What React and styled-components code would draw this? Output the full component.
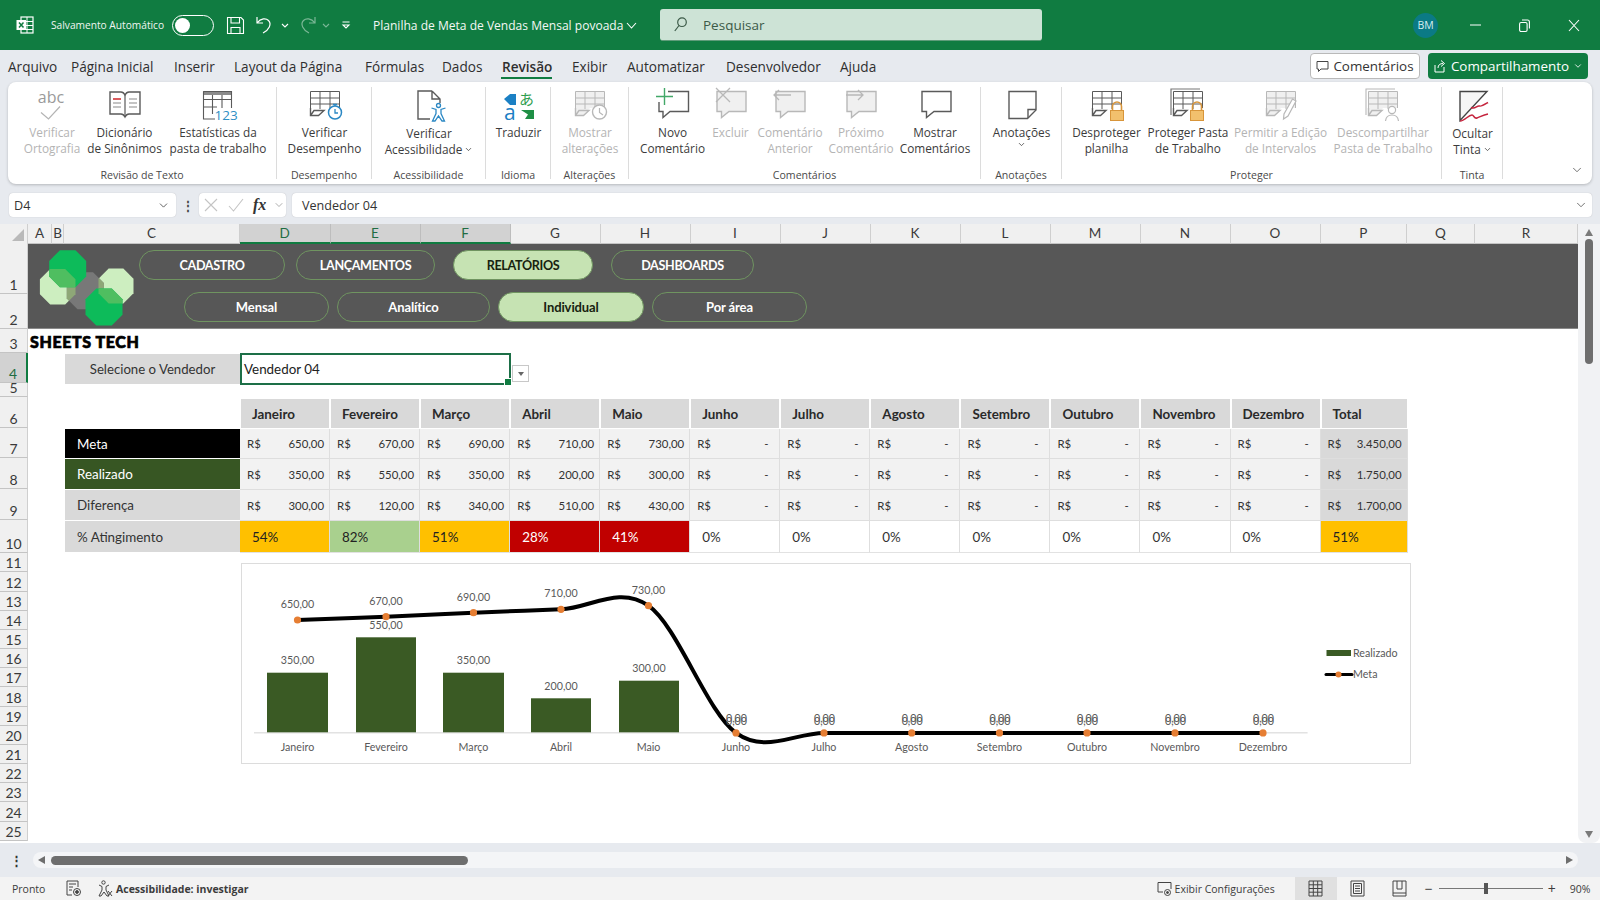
import React from "react";
import styled, { createGlobalStyle } from "styled-components";
import { ChevronDown } from "lucide-react";

const Global = createGlobalStyle`
  html, body { margin: 0; padding: 0; background: #e7eaef; }
  * { box-sizing: border-box; }
  body { font-family: "Open Sans", "Liberation Sans", sans-serif; }
`;
const Page = styled.div`
  width: 1600px; height: 900px; overflow: hidden; display: flex; flex-direction: column; background: #e7eaef; color: #333;
`;
/* ---------- title bar ---------- */
const TitleBar = styled.div`
  height: 50px; background: #107c41; display: flex; align-items: center; color: #fff; flex: none;
`;
const Quick = styled.svg`
  flex: none; margin-left: ${p => p.$ml}px; overflow: visible; opacity: ${p => p.$dim ? 0.45 : 1};
`;
const AutoSave = styled.span`
  margin-left: 17px; width: 114px; font-size: 10.2px; white-space: nowrap; color: #f0f6f2; flex: none;
`;
const Toggle = styled.span`
  margin-left: 7px; width: 42px; height: 21px; border: 1.5px solid #fff; border-radius: 11px; display: flex; align-items: center; padding-left: 2px; flex: none;
  &::before { content: ""; width: 15px; height: 15px; border-radius: 50%; background: #fff; }
`;
const DocTitle = styled.span`
  margin-left: 22px; width: 252px; font-size: 12.05px; white-space: nowrap; color: #f4f8f5; flex: none;
`;
const SearchBox = styled.div`
  margin-left: 23px; width: 382px; height: 32px; background: #cde3d6; border-radius: 3px; border-bottom: 1px solid #5f9c7a; display: flex; align-items: center; padding-left: 14px; gap: 16px; color: #3c5a48; font-size: 13.5px; flex: none;
`;
const Avatar = styled.span`
  margin-left: 371px; width: 25px; height: 25px; border-radius: 50%; background: #0b7a85; font-size: 10.5px; display: flex; align-items: center; justify-content: center; color: #d8eef0; flex: none;
`;
/* ---------- tabs ---------- */
const TabRow = styled.div`
  height: 32px; flex: none; display: flex; align-items: stretch; padding-left: 8px; padding-right: 12px; position: relative;
`;
const Tab = styled.div`
  width: ${p => p.$w}px; flex: none; font-size: 13.6px; line-height: 33px; white-space: nowrap; position: relative; color: #2f2f2f; font-weight: ${p => p.$on ? 600 : 400};
  ${p => p.$on && `&::after { content: ""; position: absolute; left: -1px; width: 51px; top: 27px; height: 2px; background: #107c41; }`}
`;
const RightButtons = styled.div`
  margin-left: auto; display: flex; gap: 8px; align-items: center; padding-top: 0;
`;
const CommentBtn = styled.div`
  width: 110px; height: 26px; background: #fff; border: 1px solid #b9b9b9; border-radius: 4px; display: flex; align-items: center; justify-content: center; gap: 4px; font-size: 13.4px; color: #333; white-space: nowrap;
`;
const ShareBtn = styled.div`
  width: 160px; height: 26px; background: #107c41; border-radius: 4px; display: flex; align-items: center; justify-content: center; gap: 4px; font-size: 13.4px; color: #fff; white-space: nowrap;
`;
/* ---------- ribbon ---------- */
const Ribbon = styled.div`
  margin: 0 8px; height: 102px; flex: none; background: #fff; border-radius: 8px; box-shadow: 0 1px 3px rgba(0,0,0,.22); display: flex; position: relative;
`;
const Group = styled.div`
  width: ${p => p.$w}px; margin-top: 5px; height: 92px; flex: none; display: flex; flex-direction: column; border-right: 1px solid #dcdcdc; padding-left: ${p => p.$pl || 0}px;
`;
const Items = styled.div`
  height: 81px; display: flex; flex: none;
`;
const GroupName = styled.div`
  text-align: center; font-size: 10.6px; line-height: 14px; color: #4a4a4a; white-space: nowrap; margin-left: ${p => -(p.$pl || 0)}px;
`;
const Item = styled.div`
  width: ${p => p.$w}px; flex: none; display: flex; flex-direction: column; align-items: center; padding-top: 1px; color: ${p => p.$off ? "#b4b4b4" : "#3b3b3b"};
`;
const IconSlot = styled.div`
  height: 32px; width: 36px; flex: none; margin-bottom: ${p => p.$drop ? 5 : 3.5}px;
`;
const ItemLine = styled.div`
  font-size: 11.8px; line-height: 16px; white-space: nowrap; display: flex; align-items: center; gap: 2px;
`;
const Collapse = styled.div`
  margin-left: auto; align-self: flex-end; margin-right: 8px; margin-bottom: 7px; color: #555; display: flex;
`;
const Ico = styled.svg`
  display: block; width: 36px; height: 32px; overflow: visible; fill: none;
`;
const Cap = styled.text`
  font-family: "Open Sans", sans-serif; font-size: ${p => p.$s}px;
`;
/* ---------- formula bar ---------- */
const FormulaBar = styled.div`
  margin: 9px 8px 0 9px; height: 24px; flex: none; display: flex; align-items: stretch; font-size: 12.6px; color: #333;
`;
const NameBox = styled.div`
  width: 167px; background: #fff; border-radius: 4px; display: flex; align-items: center; justify-content: space-between; padding: 0 6px 0 5px; box-shadow: 0 0 1px rgba(0,0,0,.25);
`;
const Dots = styled.div`
  width: 23px; flex: none; display: flex; align-items: center; justify-content: center; font-weight: 700; color: #444; font-size: 12px;
`;
const FxBox = styled.div`
  width: 87px; background: #fff; border-radius: 4px; display: flex; align-items: center; padding: 0 0 0 4px; gap: 8px; color: #c4c4c4; box-shadow: 0 0 1px rgba(0,0,0,.25);
`;
const Fx = styled.i`
  font-family: "Liberation Serif", serif; font-weight: 700; font-size: 16px; color: #333; width: 12px;
`;
const FormulaInput = styled.div`
  flex: 1; margin-left: 6px; background: #fff; border-radius: 4px; display: flex; align-items: center; padding: 0 4px 0 10px; justify-content: space-between; box-shadow: 0 0 1px rgba(0,0,0,.25);
`;
/* ---------- sheet ---------- */
const SheetWrap = styled.div`
  margin-top: 7px; height: 619px; flex: none; display: flex; background: #fff;
`;
const SheetMain = styled.div`
  width: 1578px; flex: none; display: flex; flex-direction: column;
`;
const ColHeaders = styled.div`
  height: 20px; flex: none; display: flex; background: #f0f0f0;
`;
const Corner = styled.div`
  width: 28px; flex: none; position: relative; border-right: 1px solid #cfcfcf; background: #f0f0f0;
  &::after { content: ""; position: absolute; right: 3px; bottom: 3px; border-style: solid; border-width: 0 0 12px 12px; border-color: transparent transparent #b9b9b9 transparent; }
`;
const ColHead = styled.div`
  width: ${p => p.$w}px; flex: none; text-align: center; font-family: Lato, sans-serif; font-size: 13.5px; line-height: 19px; border-right: 1px solid ${p => p.$sel ? "#bdbdbd" : "#cfcfcf"};
  background: ${p => p.$sel ? "#d2d2d2" : "#f0f0f0"}; color: ${p => p.$sel ? "#1f6d43" : "#3a3a3a"};
  border-bottom: ${p => p.$sel ? "2px solid #107c41" : "1px solid #c4c4c4"};
`;
const SheetBody = styled.div`
  flex: 1; display: flex; min-height: 0;
`;
const RowHeaders = styled.div`
  width: 28px; flex: none; display: flex; flex-direction: column; overflow: hidden;
`;
const RowHead = styled.div`
  height: ${p => p.$h}px; flex: none; overflow: hidden; display: flex; align-items: flex-end; justify-content: center; font-family: Lato, sans-serif; font-size: 14px; line-height: 16px;
  background: ${p => p.$sel ? "#d2d2d2" : "#f0f0f0"}; color: ${p => p.$sel ? "#1f6d43" : "#3a3a3a"};
  border-bottom: 1px solid #c4c4c4; border-right: ${p => p.$sel ? "2px solid #107c41" : "1px solid #cfcfcf"};
`;
const Canvas = styled.div`
  flex: 1; min-width: 0; display: flex; flex-direction: column; background: #fff; font-family: Lato, sans-serif;
`;
const Banner = styled.div`
  height: 85px; flex: none; background: #575757; display: flex; position: relative; border-bottom: 1px solid #8a8a8a;
`;
const LogoSvg = styled.svg`
  width: 96px; height: 78px; margin: 6px 0 0 12px; flex: none; overflow: visible;
`;
const NavStack = styled.div`
  margin-left: 3px; padding-top: 6px; display: flex; flex-direction: column; gap: 12px;
`;
const NavRow = styled.div`
  display: flex; margin-left: ${p => p.$indent}px;
`;
const Pill = styled.div`
  width: ${p => p.$w}px; margin-right: ${p => p.$gap}px; height: 30px; flex: none; border-radius: 15px; display: flex; align-items: center; justify-content: center;
  font-weight: 700; font-size: ${p => p.$caps ? 12.6 : 13}px; letter-spacing: ${p => p.$caps ? -0.35 : -0.1}px; border: 1px solid #6f9460;
  background: ${p => p.$on ? "#c6e3b3" : "transparent"}; color: ${p => p.$on ? "#17220f" : "#fff"};
`;
const Brand = styled.div`
  height: 24px; flex: none; padding: 5px 0 0 2px; font-family: Lato, sans-serif; font-weight: 900; font-size: 16px; line-height: 16px; color: #000; letter-spacing: .6px; -webkit-text-stroke: .7px #000;
`;
const PickRow = styled.div`
  height: 45px; flex: none; margin-left: 37px; display: flex; align-items: flex-start;
`;
const PickLabel = styled.div`
  width: 175px; height: 30px; margin-top: 1px; background: #d9d9d9; display: flex; align-items: center; justify-content: center; font-size: 13.2px; color: #333;
`;
const PickInput = styled.div`
  width: 271px; height: 32px; border: 2px solid #1d6f47; display: flex; align-items: center; padding-left: 2px; font-size: 13.4px; color: #222; position: relative; flex: none;
  &::after { content: ""; position: absolute; right: -3px; bottom: -3px; width: 6px; height: 6px; background: #107c41; border: 1px solid #fff; }
`;
const PickArrow = styled.div`
  width: 17px; height: 17px; margin-top: 12px; margin-left: 1px; border: 1px solid #c8c8c8; background: #fff; display: flex; align-items: center; justify-content: center;
  &::before { content: ""; border-style: solid; border-width: 4px 3px 0 3px; border-color: #666 transparent transparent transparent; }
`;
const Table = styled.div`
  margin-left: 37px; display: grid; grid-template-columns: 175px repeat(12, 90.05px) 87px; grid-template-rows: 31px 30px 31px 31px 32px; flex: none; width: 1343px;
`;
const EmptyCell = styled.div``;
const MonthCell = styled.div`
  background: #d9d9d9; border: 1px solid #fff; display: flex; align-items: center; padding-left: 11px; font-weight: 700; font-size: 13.4px; color: #2a2a2a;
`;
const RowLabel = styled.div`
  background: ${p => p.$bg}; color: ${p => p.$fg}; display: flex; align-items: center; padding-left: 12px; font-size: 13.4px; border-bottom: 1px solid #fff;
`;
const MoneyCell = styled.div`
  background: ${p => p.$total ? "#d9d9d9" : "#f2f2f2"}; border-right: 1px solid #dedede; border-bottom: 1px solid #dedede; display: flex; align-items: center; justify-content: space-between; padding: 0 5px 0 7px; font-size: 11.4px; color: #333;
`;
const PctCell = styled.div`
  background: ${p => p.$bg}; color: ${p => p.$fg}; border-right: 1px solid #dedede; border-bottom: 1px solid #e2e2e2; display: flex; align-items: center; padding-left: 12px; font-size: 13.4px;
`;
const ChartCard = styled.div`
  margin: 10px 0 0 213px; width: 1170px; height: 201px; flex: none; border: 1px solid #dcdcdc; background: #fff;
`;
const ChartSvg = styled.svg`
  display: block; width: 100%; height: 100%;
`;
const ChartText = styled.text`
  font-family: Lato, sans-serif; font-size: 10.7px; fill: #595959; text-anchor: ${p => p.$anchor || "middle"}; dominant-baseline: central;
  transform: translateY(-1px);
`;
const VScroll = styled.div`
  width: 22px; flex: none; background: #f1f2f4; display: flex; flex-direction: column; align-items: center; border-radius: 0 0 8px 8px; padding-top: 5px;
`;
const ArrowUp = styled.div`
  border-style: solid; border-width: 0 4.5px 7px 4.5px; border-color: transparent transparent #7a7a7a transparent;
`;
const ArrowDown = styled.div`
  margin-top: auto; margin-bottom: 5px; border-style: solid; border-width: 7px 4.5px 0 4.5px; border-color: #7a7a7a transparent transparent transparent;
`;
const VThumb = styled.div`
  width: 8px; height: 125px; margin-top: 3px; background: #6e6e6e; border-radius: 4px;
`;
/* ---------- horizontal scroll ---------- */
const HScrollArea = styled.div`
  height: 34px; flex: none; display: flex; align-items: center; background: #e7eaef; padding-top: 0;
`;
const HDots = styled.div`
  width: 33px; flex: none; text-align: center; font-weight: 700; font-size: 13px; color: #333; line-height: 16px;
`;
const HTrack = styled.div`
  width: 1545px; height: 16px; flex: none; background: #f4f5f7; border-radius: 8px; display: flex; align-items: center; padding-left: 5px;
`;
const ArrowLeft = styled.div`
  border-style: solid; border-width: 4.5px 7px 4.5px 0; border-color: transparent #6e6e6e transparent transparent; flex: none;
`;
const ArrowRight = styled.div`
  margin-left: auto; margin-right: 5px; border-style: solid; border-width: 4.5px 0 4.5px 7px; border-color: transparent transparent transparent #6e6e6e; flex: none;
`;
const HThumb = styled.div`
  width: 417px; height: 9px; margin-left: 6px; background: #6e6e6e; border-radius: 5px; flex: none;
`;
/* ---------- status ---------- */
const Status = styled.div`
  height: 23px; flex: none; background: #f3f3f3; display: flex; align-items: stretch; font-size: 10.5px; color: #3c3c3c;
`;
const StatusItem = styled.div`
  display: flex; align-items: center; margin-left: ${p => p.$ml}px; gap: ${p => p.$gap || 0}px; white-space: nowrap; flex: none; font-weight: ${p => p.$bold ? 700 : 400};
  width: ${p => p.$w ? p.$w + "px" : "auto"}; justify-content: ${p => p.$center ? "center" : "flex-start"};
  background: ${p => p.$on ? "#e0e0e0" : "transparent"}; font-size: ${p => p.$big ? "14px" : "inherit"};
`;
const ZoomTrack = styled.div`
  width: 104px; height: 1px; margin-left: 5px; background: #777; position: relative; flex: none; align-self: center;
  &::after { content: ""; position: absolute; left: 45px; top: -5px; width: 4px; height: 11px; background: #555; }
`;

/* ---------- icons ---------- */
const GRAY = "#5a5a5a", OFF = "#b8b8b8";
const GridPaths = ({ c, fill }) => (
  <g stroke={c} strokeWidth="1.2">
    <path d="M3.5 3.5H32.5V20H18L11.5 27.5H3.5Z" fill={fill} stroke="none" />
    <path d="M3.5 20V3.5H32.5V20M3.5 10H32.5M3.5 16H32.5M13 3.5V21M23 3.5V21" strokeWidth="1" />
    <path d="M3.5 20V27.5H11.5L17 22.5H7L3.5 27.5" strokeWidth="1.4" />
  </g>
);
const Bubble = ({ c, fill, x = 4 }) => (
  <path d={`M${x} 3.5H${x + 29}V23.5H${x + 12}L${x + 4.5} 29.5V23.5H${x}Z`} stroke={c} strokeWidth="1.4" fill={fill} />
);
const Lock = ({ x }) => (
  <g transform={`translate(${x} 0)`}>
    <path d="M2.5 23V18.5a4.5 4.5 0 0 1 9 0V23" stroke="#d8953a" strokeWidth="1.6" />
    <rect x=".5" y="22.5" width="13" height="10" fill="#f2c06d" stroke="#d8953a" strokeWidth="1" />
  </g>
);
const I = {
  spell: (
    <Ico viewBox="0 0 36 32"><Cap x="17" y="15" $s="16" fill="#9a9a9a" textAnchor="middle">abc</Cap>
      <path d="M7 24.5L14.5 31L26 18.5" stroke="#b4b4b4" strokeWidth="1.2" /></Ico>
  ),
  book: (
    <Ico viewBox="0 0 36 32">
      <path d="M14 4H3V26H14C16 26 17 27 18 29C19 27 20 26 22 26H33V4H22C20 4 19 5 18 7C17 5 16 4 14 4Z" stroke={GRAY} strokeWidth="1.4" />
      <path d="M18 7V29" stroke={GRAY} strokeWidth="1.2" />
      <path d="M6 11H14" stroke="#d13438" strokeWidth="1.6" />
      <path d="M6 15H14M6 19H14M22 11H30M22 15H30M22 19H30" stroke="#8a8a8a" strokeWidth="1.2" />
    </Ico>
  ),
  stats: (
    <Ico viewBox="0 0 36 32">
      <rect x="3" y="3" width="29" height="4" fill="#8a8a8a" />
      <path d="M3.5 3.5H31.5V20M3.5 3.5V31H15M3.5 11.5H31.5M3.5 19H17M12.5 7V26M22 7V20" stroke={GRAY} strokeWidth="1.1" />
      <Cap x="14.5" y="32" $s="13.5" fill="#2f8fc4">123</Cap>
    </Ico>
  ),
  perf: (
    <Ico viewBox="0 0 36 32"><GridPaths c={GRAY} />
      <circle cx="28" cy="24.5" r="6.5" fill="#fff" stroke="#2b88c4" strokeWidth="1.5" />
      <path d="M28 21V25H31M26 16.5H30M28 16.5V18" stroke="#2b88c4" strokeWidth="1.3" />
    </Ico>
  ),
  access: (
    <Ico viewBox="0 0 36 32">
      <path d="M21 3H7V31H19M21 3L29 11V15M21 3V11H29" stroke={GRAY} strokeWidth="1.4" />
      <circle cx="27.5" cy="17.5" r="2" stroke="#2b88c4" strokeWidth="1.3" />
      <path d="M20.5 20L25 21.5V25.5L21.5 33H24L27.5 28L31 33H33.5L30 25.5V21.5L34.5 20" stroke="#2b88c4" strokeWidth="1.3" />
    </Ico>
  ),
  translate: (
    <Ico viewBox="0 0 36 32">
      <path d="M3 11L9 6H15V17H9Z" fill="#1b80c4" />
      <Cap x="3" y="32" $s="21" fill="#1b80c4">a</Cap>
      <text x="18" y="17" fontFamily="'Noto Sans CJK JP', sans-serif" fontSize="15" fill="#2f9e4f">あ</text>
      <path d="M20 22H33V31H24L27 26.5Z" fill="#1f8f45" />
    </Ico>
  ),
  changes: (
    <Ico viewBox="0 0 36 32"><GridPaths c={OFF} fill="#f0f0f0" />
      <circle cx="27.5" cy="24" r="7" fill="#fff" stroke={OFF} strokeWidth="1.4" />
      <path d="M27.5 20V24.5L31 27" stroke={OFF} strokeWidth="1.2" />
    </Ico>
  ),
  newC: (
    <Ico viewBox="0 0 36 32">
      <path d="M13 3.5H33.5V23.5H15L8 29.5V23.5H4V14" stroke={GRAY} strokeWidth="1.4" />
      <path d="M1 8.5H18M9.5 0V17" stroke="#42a868" strokeWidth="1.4" />
    </Ico>
  ),
  del: (
    <Ico viewBox="0 0 36 32"><Bubble c={OFF} fill="#f0f0f0" />
      <path d="M3 0L17 14M17 0L3 14" stroke={OFF} strokeWidth="1.3" />
    </Ico>
  ),
  prev: (
    <Ico viewBox="0 0 36 32"><Bubble c={OFF} fill="#f0f0f0" />
      <path d="M19 7H2M7 2L2 7L7 12" stroke={OFF} strokeWidth="1.3" />
    </Ico>
  ),
  next: (
    <Ico viewBox="0 0 36 32"><Bubble c={OFF} fill="#f0f0f0" />
      <path d="M3 7H20M15 2L20 7L15 12" stroke={OFF} strokeWidth="1.3" />
    </Ico>
  ),
  show: (<Ico viewBox="0 0 36 32"><Bubble c={GRAY} fill="#fff" x={5} /></Ico>),
  note: (
    <Ico viewBox="0 0 36 32">
      <path d="M5 3.5H32V22L23.5 30.5H5Z" stroke={GRAY} strokeWidth="1.4" />
      <path d="M32 21.5H24V30" stroke={GRAY} strokeWidth="1.4" />
    </Ico>
  ),
  unprotect: (<Ico viewBox="0 0 36 32"><GridPaths c={GRAY} /><Lock x={21} /></Ico>),
  protect: (
    <Ico viewBox="0 0 36 32">
      <path d="M1 27V1H30" stroke="#777" strokeWidth="1.2" /><GridPaths c={GRAY} /><Lock x={20} />
    </Ico>
  ),
  allow: (
    <Ico viewBox="0 0 36 32"><GridPaths c={OFF} fill="#f0f0f0" />
      <path d="M33 13L25 28L20.5 31L21 26L29.5 11Z" fill="#fff" stroke={OFF} strokeWidth="1.2" />
    </Ico>
  ),
  unshare: (
    <Ico viewBox="0 0 36 32">
      <path d="M1 27V1H30" stroke={OFF} strokeWidth="1.1" /><GridPaths c={OFF} fill="#f0f0f0" />
      <circle cx="27" cy="22" r="3.6" fill="#fff" stroke={OFF} strokeWidth="1.2" />
      <path d="M20.5 33C21 28 24 27 27 27C30 27 33 28 33.5 33" fill="#fff" stroke={OFF} strokeWidth="1.2" />
    </Ico>
  ),
  ink: (
    <Ico viewBox="0 0 36 32">
      <path d="M5 3.5H32L5 32.5Z" stroke="#444" strokeWidth="1.4" fill="#f6f6f6" />
      <path d="M16 19.5C20 22 22 17 24.5 18C26 18.8 28 17.5 33 14.5" stroke="#c5243d" strokeWidth="1.5" />
      <path d="M5 33C10 33 13 27 17 27C19 27 19 31 22 30C25 29 28 27 33 26" stroke="#c5243d" strokeWidth="1.5" />
    </Ico>
  ),
};

const RIBBON = [
  { name: "Revisão de Texto", w: 269, pl: 8, items: [
    { w: 72, ic: "spell", off: 1, l: ["Verificar", "Ortografia"] },
    { w: 73, ic: "book", l: ["Dicionário", "de Sinônimos"] },
    { w: 114, ic: "stats", l: ["Estatísticas da", "pasta de trabalho"] }] },
  { name: "Desempenho", w: 95, items: [{ w: 95, ic: "perf", l: ["Verificar", "Desempenho"] }] },
  { name: "Acessibilidade", w: 114, items: [{ w: 114, ic: "access", drop: 1, l: ["Verificar", "Acessibilidade"], chev: 1 }] },
  { name: "Idioma", w: 65, items: [{ w: 65, ic: "translate", l: ["Traduzir"] }] },
  { name: "Alterações", w: 78, items: [{ w: 78, ic: "changes", off: 1, l: ["Mostrar", "alterações"] }] },
  { name: "Comentários", w: 352, pl: 5, items: [
    { w: 77, ic: "newC", l: ["Novo", "Comentário"] },
    { w: 39, ic: "del", off: 1, l: ["Excluir"] },
    { w: 80, ic: "prev", off: 1, l: ["Comentário", "Anterior"] },
    { w: 62, ic: "next", off: 1, l: ["Próximo", "Comentário"] },
    { w: 86, ic: "show", l: ["Mostrar", "Comentários"] }] },
  { name: "Anotações", w: 81, items: [{ w: 81, ic: "note", l: ["Anotações"], chevLine: 1 }] },
  { name: "Proteger", w: 380, pl: 4, items: [
    { w: 81, ic: "unprotect", l: ["Desproteger", "planilha"] },
    { w: 82, ic: "protect", l: ["Proteger Pasta", "de Trabalho"] },
    { w: 103, ic: "allow", off: 1, l: ["Permitir a Edição", "de Intervalos"] },
    { w: 102, ic: "unshare", off: 1, l: ["Descompartilhar", "Pasta de Trabalho"] }] },
  { name: "Tinta", w: 61, items: [{ w: 61, ic: "ink", drop: 1, l: ["Ocultar", "Tinta"], chev: 1 }] },
];

const TABS = [["Arquivo", 63], ["Página Inicial", 103], ["Inserir", 60], ["Layout da Página", 131], ["Fórmulas", 77], ["Dados", 60], ["Revisão", 70, 1], ["Exibir", 55], ["Automatizar", 99], ["Desenvolvedor", 114], ["Ajuda", 60]];
const COLS = [["A", 24], ["B", 12], ["C", 176], ["D", 90.5, 1], ["E", 90, 1], ["F", 90, 1], ["G", 90], ["H", 90], ["I", 90], ["J", 90], ["K", 90], ["L", 90], ["M", 90], ["N", 90], ["O", 90], ["P", 86.5], ["Q", 68], ["R", 103]];
const ROWS = [50, 35, 24, 30, 14, 31, 30, 31, 31, 33, 19, 20, 19, 19, 19, 19, 19, 20, 19, 19, 19, 19, 19, 20, 19];
const MONTHS = ["Janeiro", "Fevereiro", "Março", "Abril", "Maio", "Junho", "Julho", "Agosto", "Setembro", "Outubro", "Novembro", "Dezembro"];
const TABLE = [
  { label: "Meta", bg: "#000", fg: "#fff", v: ["650,00", "670,00", "690,00", "710,00", "730,00"], t: "3.450,00" },
  { label: "Realizado", bg: "#375623", fg: "#fff", v: ["350,00", "550,00", "350,00", "200,00", "300,00"], t: "1.750,00" },
  { label: "Diferença", bg: "#d9d9d9", fg: "#333", v: ["300,00", "120,00", "340,00", "510,00", "430,00"], t: "1.700,00" },
];
const AMBER = ["#ffc000", "#222"], GREEN = ["#a9d08e", "#222"], RED = ["#c00000", "#fff"], NONE = ["#fff", "#333"];
const PCT = [["54%", AMBER], ["82%", GREEN], ["51%", AMBER], ["28%", RED], ["41%", RED]];

/* chart */
const XS = [297.5, 386, 473.5, 561, 648.5, 736, 824, 911.7, 999.5, 1087, 1175, 1263];
const BASE = 732.3;
const META = [620, 616.7, 612.7, 609.3, 605.7];
const PTS = XS.map((x, i) => [x, i < 5 ? META[i] : BASE + 0.6]);
const smooth = pts => {
  let d = `M${pts[0][0]} ${pts[0][1]}`;
  for (let i = 0; i < pts.length - 1; i++) {
    const p0 = pts[i - 1] || pts[i], p1 = pts[i], p2 = pts[i + 1], p3 = pts[i + 2] || p2;
    d += `C${p1[0] + (p2[0] - p0[0]) / 6} ${p1[1] + (p2[1] - p0[1]) / 6} ${p2[0] - (p3[0] - p1[0]) / 6} ${p2[1] - (p3[1] - p1[1]) / 6} ${p2[0]} ${p2[1]}`;
  }
  return d;
};
const BARS = [[267, 61, 672.7, "350,00"], [356, 60, 637.3, "550,00"], [443, 61, 672.7, "350,00"], [531, 60, 698.3, "200,00"], [619, 60, 680.7, "300,00"]];
const METAL = ["650,00", "670,00", "690,00", "710,00", "730,00"];

const Octagon = ({ cx, cy, r = 18.5, fill, clip }) => {
  const a = r, b = r * 0.42;
  const pts = [[-b, -a], [b, -a], [a, -b], [a, b], [b, a], [-b, a], [-a, b], [-a, -b]].map(([x, y]) => `${cx + x},${cy + y}`).join(" ");
  return <polygon points={pts} fill={fill} clipPath={clip} />;
};
const PALE = [[57.7, 286.8], [116, 286]];
const Logo = () => (
  <LogoSvg viewBox="40 250 96 78">
    <defs>
      <clipPath id="c1"><Octagon cx={67.7} cy={268.7} fill="#000" /></clipPath>
      <clipPath id="c2"><Octagon cx={104} cy={307} fill="#000" /></clipPath>
      <clipPath id="c3"><Octagon cx={85.3} cy={290.7} fill="#000" /></clipPath>
    </defs>
    <Octagon cx={PALE[0][0]} cy={PALE[0][1]} r={17.8} fill="#cdeec0" />
    <Octagon cx={PALE[1][0]} cy={PALE[1][1]} r={17.5} fill="#cdeec0" />
    <Octagon cx={85.3} cy={290.7} fill="#787878" />
    <Octagon cx={PALE[0][0]} cy={PALE[0][1]} r={17.8} fill="#8ea777" clip="url(#c3)" />
    <Octagon cx={PALE[1][0]} cy={PALE[1][1]} r={17.5} fill="#8ea777" clip="url(#c3)" />
    <Octagon cx={67.7} cy={268.7} fill="#0dbb5a" />
    <Octagon cx={104} cy={307} fill="#0dbb5a" />
    <Octagon cx={PALE[0][0]} cy={PALE[0][1]} r={17.8} fill="#4fbe60" clip="url(#c1)" />
    <Octagon cx={PALE[1][0]} cy={PALE[1][1]} r={17.5} fill="#4fbe60" clip="url(#c2)" />
  </LogoSvg>
);

const Chart = () => (
  <ChartSvg viewBox="242 564 1168 199" fill="none">
    <path d="M254 732.8H1307.6" stroke="#e2e2e2" strokeWidth="1.5" />
    {BARS.map(([x, w, y, t]) => (
      <g key={x}>
        <rect x={x} y={y} width={w} height={BASE - y} fill="#3a5a24" />
        <ChartText x={x + w / 2} y={y - 12}>{t}</ChartText>
      </g>
    ))}
    <path d={smooth(PTS)} stroke="#000" strokeWidth="4" strokeLinecap="round" />
    {PTS.map(([x, y], i) => (
      <g key={x}>
        <circle cx={x} cy={y} r="3.6" fill="#e67e33" />
        {i < 5 ? <ChartText x={x} y={y - 15.5}>{METAL[i]}</ChartText> : (
          <>
            <ChartText x={x + 0.5} y={718}>0,00</ChartText>
            <ChartText x={x + 0.5} y={721}>0,00</ChartText>
          </>
        )}
        <ChartText x={x} y={747.3}>{MONTHS[i]}</ChartText>
      </g>
    ))}
    <rect x="1326.5" y="650" width="24.5" height="6" fill="#3a5a24" />
    <ChartText x="1353" y="653" $anchor="start">Realizado</ChartText>
    <path d="M1326 674.5H1352" stroke="#000" strokeWidth="3" strokeLinecap="round" />
    <circle cx="1338.5" cy="674.5" r="3" fill="#e67e33" />
    <ChartText x="1353" y="674.5" $anchor="start">Meta</ChartText>
  </ChartSvg>
);

export default function App() {
  return (
    <Page>
      <Global />
      <TitleBar>
        <Quick $ml={16} width="18" height="18" viewBox="0 0 18 18" fill="none">
          <rect x="5" y="1" width="12" height="16" fill="#107c41" stroke="#fff" strokeWidth="1.2" />
          <path d="M11 1V17M5 5.5H17M5 9.5H17M5 13.5H17" stroke="#fff" strokeWidth="1" />
          <rect x="0.5" y="4" width="9.5" height="10" fill="#fff" />
          <path d="M3 6.5L7.5 11.5M7.5 6.5L3 11.5" stroke="#107c41" strokeWidth="1.5" />
        </Quick>
        <AutoSave>Salvamento Automático</AutoSave>
        <Toggle />
        <Quick $ml={13} width="17" height="17" viewBox="0 0 17 17" fill="none" stroke="#fff" strokeWidth="1.1">
          <path d="M.5.5H14L16.5 3V16.5H.5ZM4 .5V6H12.5V.5M4 16.5V10.5H13V16.5" />
        </Quick>
        <Quick $ml={12} width="18" height="18" viewBox="0 0 18 18" fill="none" stroke="#fff" strokeWidth="1.2">
          <path d="M1 1V7H7M1 7C5 2 10 2 12.5 4.5C16 8 13 14 7 17" />
        </Quick>
        <Quick $ml={6} width="10" height="10" viewBox="0 0 10 10" fill="none" stroke="#fff" strokeWidth="1.1"><path d="M2 4L5 7L8 4" /></Quick>
        <Quick $ml={8} $dim width="18" height="18" viewBox="0 0 18 18" fill="none" stroke="#fff" strokeWidth="1.2">
          <path d="M17 1V7H11M17 7C13 2 8 2 5.5 4.5C2 8 5 14 11 17" />
        </Quick>
        <Quick $ml={5} $dim width="10" height="10" viewBox="0 0 10 10" fill="none" stroke="#fff" strokeWidth="1.1"><path d="M2 4L5 7L8 4" /></Quick>
        <Quick $ml={10} width="10" height="10" viewBox="0 0 10 10" fill="none" stroke="#fff" strokeWidth="1.1"><path d="M1.5 2H8.5M2 5H8L5 8Z" /></Quick>
        <DocTitle>Planilha de Meta de Vendas Mensal povoada</DocTitle>
        <Quick $ml={1} width="11" height="11" viewBox="0 0 11 11" fill="none" stroke="#fff" strokeWidth="1.1"><path d="M1 3L5.5 8L10 3" /></Quick>
        <SearchBox>
          <svg width="13" height="15" viewBox="0 0 13 15" fill="none" stroke="#3c5a48" strokeWidth="1.2">
            <circle cx="8" cy="5.2" r="4.3" /><path d="M5 8.5L.8 14" />
          </svg>
          Pesquisar
        </SearchBox>
        <Avatar>BM</Avatar>
        <Quick $ml={32} width="11" height="2" viewBox="0 0 11 2" fill="none" stroke="#fff"><path d="M0 1H11" /></Quick>
        <Quick $ml={38} width="11" height="13" viewBox="0 0 11 13" fill="none" stroke="#fff" strokeWidth="1.1">
          <rect x=".6" y="3.5" width="7.5" height="9" rx="1.5" /><path d="M3 1H8.5C9.6 1 10.4 1.8 10.4 3V9.5" />
        </Quick>
        <Quick $ml={38} width="12" height="13" viewBox="0 0 12 13" fill="none" stroke="#fff" strokeWidth="1.1"><path d="M1 1L11 12M11 1L1 12" /></Quick>
      </TitleBar>

      <TabRow>
        {TABS.map(([t, w, on]) => <Tab key={t} $w={w} $on={on}>{t}</Tab>)}
        <RightButtons>
          <CommentBtn>
            <svg width="13" height="13" viewBox="0 0 13 13" fill="none" stroke="#444" strokeWidth="1"><path d="M1 1.5H12V9H5L2.5 11.5V9H1Z" /></svg>
            Comentários
          </CommentBtn>
          <ShareBtn>
            <svg width="14" height="14" viewBox="0 0 14 14" fill="none" stroke="#fff" strokeWidth="1"><path d="M2 6V13H11V8M5 9C5 6 7 4.5 10 4.5M8 1.5L11.5 4.5L8 7.5" /></svg>
            Compartilhamento
            <ChevronDown size={10} strokeWidth={2} />
          </ShareBtn>
        </RightButtons>
      </TabRow>

      <Ribbon>
        {RIBBON.map(g => (
          <Group key={g.name} $w={g.w} $pl={g.pl}>
            <Items>
              {g.items.map(it => (
                <Item key={it.ic} $w={it.w} $off={it.off}>
                  <IconSlot $drop={it.drop}>{I[it.ic]}</IconSlot>
                  {it.l.map((line, i) => (
                    <ItemLine key={line}>
                      {line}
                      {it.chev && i === it.l.length - 1 ? <ChevronDown size={9} strokeWidth={2} /> : null}
                    </ItemLine>
                  ))}
                  {it.chevLine ? <ItemLine><ChevronDown size={9} strokeWidth={2} /></ItemLine> : null}
                </Item>
              ))}
            </Items>
            <GroupName $pl={g.pl}>{g.name}</GroupName>
          </Group>
        ))}
        <Collapse><ChevronDown size={14} strokeWidth={1.4} /></Collapse>
      </Ribbon>

      <FormulaBar>
        <NameBox>D4<ChevronDown size={13} strokeWidth={1.4} /></NameBox>
        <Dots>⋮</Dots>
        <FxBox>
          <svg width="16" height="14" viewBox="0 0 16 14" fill="none" stroke="#c4c4c4" strokeWidth="1.1"><path d="M2 1L14 13M14 1L2 13" /></svg>
          <svg width="18" height="14" viewBox="0 0 18 14" fill="none" stroke="#c4c4c4" strokeWidth="1.1"><path d="M2 8L6.5 13L16 1" /></svg>
          <Fx>fx</Fx>
          <ChevronDown size={12} strokeWidth={1.2} color="#777" />
        </FxBox>
        <FormulaInput>Vendedor 04<ChevronDown size={14} strokeWidth={1.4} color="#555" /></FormulaInput>
      </FormulaBar>

      <SheetWrap>
        <SheetMain>
          <ColHeaders>
            <Corner />
            {COLS.map(([c, w, sel]) => <ColHead key={c} $w={w} $sel={sel}>{c}</ColHead>)}
          </ColHeaders>
          <SheetBody>
            <RowHeaders>
              {ROWS.map((h, i) => <RowHead key={i} $h={h} $sel={i === 3}>{i + 1}</RowHead>)}
            </RowHeaders>
            <Canvas>
              <Banner>
                <Logo />
                <NavStack>
                  <NavRow $indent={0}>
                    <Pill $caps $w={146} $gap={11}>CADASTRO</Pill>
                    <Pill $caps $w={139} $gap={18}>LANÇAMENTOS</Pill>
                    <Pill $caps $w={140} $gap={18} $on>RELATÓRIOS</Pill>
                    <Pill $caps $w={143} $gap={0}>DASHBOARDS</Pill>
                  </NavRow>
                  <NavRow $indent={45}>
                    <Pill $w={145} $gap={8}>Mensal</Pill>
                    <Pill $w={153} $gap={8}>Analítico</Pill>
                    <Pill $w={146} $gap={8} $on>Individual</Pill>
                    <Pill $w={155} $gap={0}>Por área</Pill>
                  </NavRow>
                </NavStack>
              </Banner>
              <Brand>SHEETS TECH</Brand>
              <PickRow>
                <PickLabel>Selecione o Vendedor</PickLabel>
                <PickInput>Vendedor 04</PickInput>
                <PickArrow />
              </PickRow>
              <Table>
                <EmptyCell />
                {MONTHS.map(m => <MonthCell key={m}>{m}</MonthCell>)}
                <MonthCell>Total</MonthCell>
                {TABLE.map(r => (
                  <React.Fragment key={r.label}>
                    <RowLabel $bg={r.bg} $fg={r.fg}>{r.label}</RowLabel>
                    {MONTHS.map((m, i) => (
                      <MoneyCell key={m}><span>R$</span><span>{r.v[i] || "-"}{r.v[i] ? "" : "\u00a0\u00a0"}</span></MoneyCell>
                    ))}
                    <MoneyCell $total><span>R$</span><span>{r.t}</span></MoneyCell>
                  </React.Fragment>
                ))}
                <RowLabel $bg="#d9d9d9" $fg="#333">% Atingimento</RowLabel>
                {MONTHS.map((m, i) => {
                  const [t, c] = PCT[i] || ["0%", NONE];
                  return <PctCell key={m} $bg={c[0]} $fg={c[1]}>{t}</PctCell>;
                })}
                <PctCell $bg={AMBER[0]} $fg={AMBER[1]}>51%</PctCell>
              </Table>
              <ChartCard><Chart /></ChartCard>
            </Canvas>
          </SheetBody>
        </SheetMain>
        <VScroll>
          <ArrowUp />
          <VThumb />
          <ArrowDown />
        </VScroll>
      </SheetWrap>

      <HScrollArea>
        <HDots>⋮</HDots>
        <HTrack>
          <ArrowLeft />
          <HThumb />
          <ArrowRight />
        </HTrack>
      </HScrollArea>

      <Status>
        <StatusItem $ml={12} $w={53}>Pronto</StatusItem>
        <StatusItem>
          <svg width="17" height="17" viewBox="0 0 17 17" fill="none" stroke="#444" strokeWidth="1"><path d="M2 1H13V7M2 1V15H7M4 4H11M4 7H8M4 10H7" /><circle cx="12" cy="12" r="3.5" /><circle cx="12" cy="12" r="1.4" fill="#444" /></svg>
        </StatusItem>
        <StatusItem $ml={16} $gap={3} $bold>
          <svg width="15" height="17" viewBox="0 0 15 17" fill="none" stroke="#444" strokeWidth="1"><circle cx="5.5" cy="2.5" r="1.7" /><path d="M1 5L4 6.5V10L1 16H3L6 12L9 16H11L8 10V6.5L11 5" /><path d="M10 11L14 16M14 11L10 16" /></svg>
          Acessibilidade: investigar
        </StatusItem>
        <StatusItem $ml={908} $gap={2}>
          <svg width="16" height="16" viewBox="0 0 16 16" fill="none" stroke="#444" strokeWidth="1"><path d="M1 1.5H14V8M1 1.5V11H6" /><circle cx="10.5" cy="11.5" r="3" /><circle cx="10.5" cy="11.5" r="1" fill="#444" /></svg>
          Exibir Configurações
        </StatusItem>
        <StatusItem $ml={20} $w={42} $center $on>
          <svg width="15" height="17" viewBox="0 0 15 17" fill="none" stroke="#444" strokeWidth="1"><path d="M1 1H14V16H1ZM5.3 1V16M9.7 1V16M1 4.8H14M1 8.5H14M1 12.2H14" /></svg>
        </StatusItem>
        <StatusItem $w={42} $center>
          <svg width="15" height="17" viewBox="0 0 15 17" fill="none" stroke="#444" strokeWidth="1"><path d="M1 1H14V16H1ZM3.5 3.5H11.5V13.5H3.5ZM5 6H10M5 8.5H10M5 11H10" /></svg>
        </StatusItem>
        <StatusItem $w={42} $center>
          <svg width="15" height="17" viewBox="0 0 15 17" fill="none" stroke="#444" strokeWidth="1"><path d="M1 1H14V16H1ZM1 13H14M5 1V9H10V1" /></svg>
        </StatusItem>
        <StatusItem $ml={3} $w={10} $center $big>−</StatusItem>
        <ZoomTrack />
        <StatusItem $ml={4} $w={10} $center $big>+</StatusItem>
        <StatusItem $ml={13}>90%</StatusItem>
      </Status>
    </Page>
  );
}
